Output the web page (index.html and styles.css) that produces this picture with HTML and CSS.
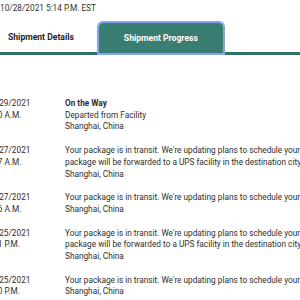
FILE: index.html
```html
<!DOCTYPE html>
<html lang="en">
<head>
  <meta charset="UTF-8">
  <meta name="viewport" content="width=device-width, initial-scale=1.0">
  <title>Shipment Progress</title>
  <link rel="stylesheet" href="styles.css">
</head>
<body>
  <div class="page">
    <p class="stamp">10/28/2021 5:14 P.M. EST</p>

    <div class="tabs">
      <button class="tab">Shipment Details</button>
      <button class="tab active">Shipment Progress</button>
    </div>

    <ul class="events">
      <li class="event">
        <div class="when"><span>10/29/2021</span><span>9:40 A.M.</span></div>
        <div class="what">
          <strong>On the Way</strong>
          <span>Departed from Facility</span>
          <span>Shanghai, China</span>
        </div>
      </li>
      <li class="event">
        <div class="when"><span>10/27/2021</span><span>5:07 A.M.</span></div>
        <div class="what">
          <p>Your package is in transit. We're updating plans to schedule your delivery. Your package will be forwarded to a UPS facility in the destination city.</p>
          <span>Shanghai, China</span>
        </div>
      </li>
      <li class="event">
        <div class="when"><span>10/27/2021</span><span>4:16 A.M.</span></div>
        <div class="what">
          <p>Your package is in transit. We're updating plans to schedule your delivery.</p>
          <span>Shanghai, China</span>
        </div>
      </li>
      <li class="event">
        <div class="when"><span>10/25/2021</span><span>7:21 P.M.</span></div>
        <div class="what">
          <p>Your package is in transit. We're updating plans to schedule your delivery. Your package will be forwarded to a UPS facility in the destination city.</p>
          <span>Shanghai, China</span>
        </div>
      </li>
      <li class="event">
        <div class="when"><span>10/25/2021</span><span>9:40 P.M.</span></div>
        <div class="what">
          <p>Your package is in transit. We're updating plans to schedule your delivery.</p>
          <span>Shanghai, China</span>
        </div>
      </li>
    </ul>
  </div>
</body>
</html>
```

FILE: styles.css
```css
:root {
  --teal: #3a7d72;
  --teal-dark: #2f7266;
  --focus: #84a4f2;
  --text-color: #2e2e2e;
}

body {
  margin: 0;
  overflow: hidden;
  font-family: Roboto, "Liberation Sans", Arial, sans-serif;
  font-size: 8.25px;
  color: var(--text-color);
  background: #ffffff;
}

.page {
  width: 520px;
  margin-left: -17px;
}

.stamp {
  margin: 0 0 6px;
  padding-left: 17px;
  line-height: 16px;
  color: #333333;
}

/* tabs */
.tabs {
  display: flex;
  border-bottom: 3px solid var(--teal-dark);
}

.tab {
  height: 30px;
  padding: 0 25px;
  border: none;
  background: transparent;
  font-family: inherit;
  font-size: 8.6px;
  font-weight: bold;
  color: #1e1e1e;
}

.tab.active {
  background-color: var(--teal);
  color: #ffffff;
  border-radius: 4px 4px 0 0;
  outline: 2px solid var(--focus);
  outline-offset: 0;
  position: relative;
  top: 1px;
}

/* events */
.events {
  list-style: none;
  margin: 37px 0 0;
  padding: 0;
}

.event {
  display: flex;
  padding: 6px 0;
  line-height: 11.7px;
}

.when {
  width: 82px;
  padding-left: 3.5px;
  box-sizing: border-box;
  display: flex;
  flex-direction: column;
  flex-shrink: 0;
}

.what {
  width: 312px;
  display: flex;
  flex-direction: column;
}

.what p {
  margin: 0;
}

.what strong {
  font-weight: bold;
}
```
